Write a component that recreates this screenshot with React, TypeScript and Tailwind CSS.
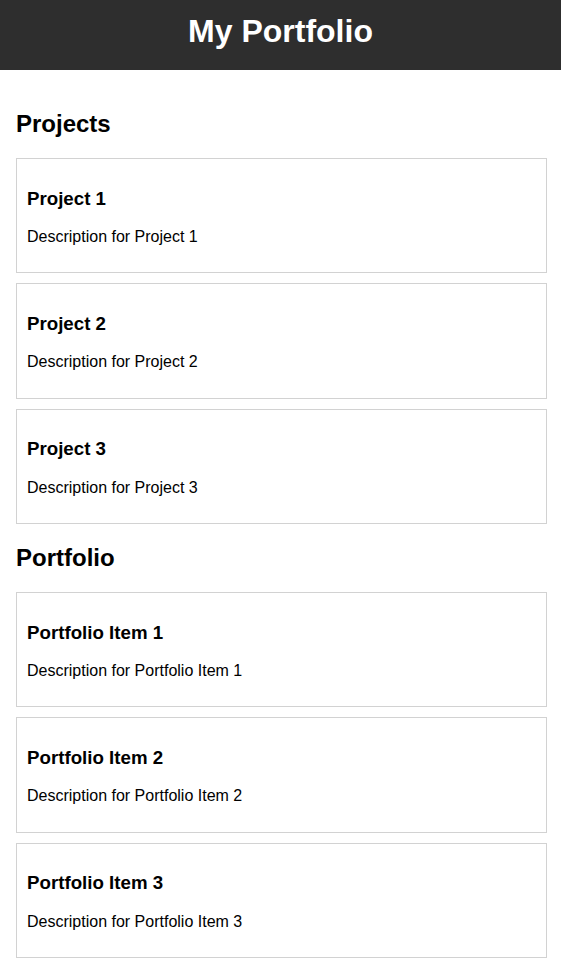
const projects = ["Project 1", "Project 2", "Project 3"];
const portfolio = ["Portfolio Item 1", "Portfolio Item 2", "Portfolio Item 3"];

function Card({ title }: { title: string }) {
  return (
    <div className="border border-[#d2d2d2] px-[10px] pt-[10px] pb-[10px]">
      <h3 className="text-[18.72px] leading-[21.5px] font-bold mt-[18.72px] mb-[18.72px]">
        {title}
      </h3>
      <p className="text-[16px] leading-[18.4px] mb-4">Description for {title}</p>
    </div>
  );
}

function Section({ title, items, first }: { title: string; items: string[]; first?: boolean }) {
  return (
    <section className={first ? "" : "mt-[20px]"}>
      <h2 className="text-[24px] leading-[28px] font-bold mb-[20px]">{title}</h2>
      <div className="flex flex-col gap-[10px]">
        {items.map((t) => (
          <Card key={t} title={t} />
        ))}
      </div>
    </section>
  );
}

export default function App() {
  return (
    <div className="min-h-screen bg-white text-black font-['Liberation_Sans',Arial,sans-serif]">
      <header className="h-[70px] bg-[#2e2e2e] pt-[13px] text-center">
        <h1 className="text-[32px] leading-[37px] font-bold text-white">My Portfolio</h1>
      </header>
      <main className="pl-4 pr-[14px] pt-[40px] pb-5">
        <Section title="Projects" items={projects} first />
        <Section title="Portfolio" items={portfolio} />
      </main>
    </div>
  );
}
